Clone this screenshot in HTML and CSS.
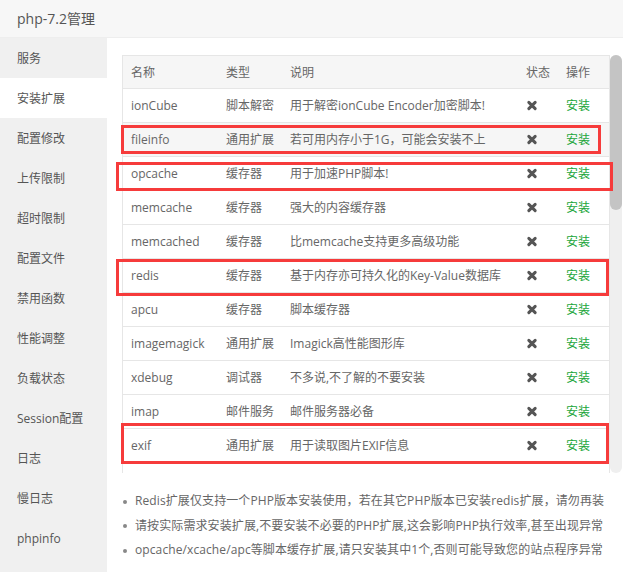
FILE: index.html
```html
<!DOCTYPE html>
<html lang="zh-CN">
<head>
<meta charset="utf-8">
<title>php-7.2管理</title>
<link rel="stylesheet" href="styles.css">
</head>
<body>
<div class="page">
  <header class="title">php-7.2管理</header>
  <div class="body">
    <nav class="side">
      <div class="item">服务</div>
      <div class="item active">安装扩展</div>
      <div class="item">配置修改</div>
      <div class="item">上传限制</div>
      <div class="item">超时限制</div>
      <div class="item">配置文件</div>
      <div class="item">禁用函数</div>
      <div class="item">性能调整</div>
      <div class="item">负载状态</div>
      <div class="item">Session配置</div>
      <div class="item">日志</div>
      <div class="item">慢日志</div>
      <div class="item">phpinfo</div>
    </nav>
    <main class="content">
      <div class="listbox">
        <div class="tablebox">
          <table class="ext">
            <colgroup>
              <col class="c-name"><col class="c-type"><col class="c-desc"><col class="c-state"><col class="c-op">
            </colgroup>
            <thead>
              <tr><th>名称</th><th>类型</th><th>说明</th><th>状态</th><th>操作</th></tr>
            </thead>
            <tbody>
              <tr><td>ionCube</td><td>脚本解密</td><td>用于解密ionCube Encoder加密脚本!</td><td><span class="x"></span></td><td class="op">安装</td></tr>
              <tr class="hover"><td>fileinfo</td><td>通用扩展</td><td>若可用内存小于1G，可能会安装不上</td><td><span class="x"></span></td><td class="op">安装</td></tr>
              <tr><td>opcache</td><td>缓存器</td><td>用于加速PHP脚本!</td><td><span class="x"></span></td><td class="op">安装</td></tr>
              <tr><td>memcache</td><td>缓存器</td><td>强大的内容缓存器</td><td><span class="x"></span></td><td class="op">安装</td></tr>
              <tr><td>memcached</td><td>缓存器</td><td>比memcache支持更多高级功能</td><td><span class="x"></span></td><td class="op">安装</td></tr>
              <tr><td>redis</td><td>缓存器</td><td>基于内存亦可持久化的Key-Value数据库</td><td><span class="x"></span></td><td class="op">安装</td></tr>
              <tr><td>apcu</td><td>缓存器</td><td>脚本缓存器</td><td><span class="x"></span></td><td class="op">安装</td></tr>
              <tr><td>imagemagick</td><td>通用扩展</td><td>Imagick高性能图形库</td><td><span class="x"></span></td><td class="op">安装</td></tr>
              <tr><td>xdebug</td><td>调试器</td><td>不多说,不了解的不要安装</td><td><span class="x"></span></td><td class="op">安装</td></tr>
              <tr><td>imap</td><td>邮件服务</td><td>邮件服务器必备</td><td><span class="x"></span></td><td class="op">安装</td></tr>
              <tr><td>exif</td><td>通用扩展</td><td>用于读取图片EXIF信息</td><td><span class="x"></span></td><td class="op">安装</td></tr>
            </tbody>
          </table>
        </div>
        <div class="track"><div class="thumb"></div></div>
      </div>
      <ul class="notes">
        <li>Redis扩展仅支持一个PHP版本安装使用，若在其它PHP版本已安装redis扩展，请勿再装</li>
        <li>请按实际需求安装扩展,不要安装不必要的PHP扩展,这会影响PHP执行效率,甚至出现异常</li>
        <li>opcache/xcache/apc等脚本缓存扩展,请只安装其中1个,否则可能导致您的站点程序异常</li>
      </ul>
    </main>
  </div>
  <div class="mark m1"></div>
  <div class="mark m2"></div>
  <div class="mark m3"></div>
  <div class="mark m4"></div>
</div>
</body>
</html>
```

FILE: styles.css
```css
* { box-sizing: border-box; }
html, body { margin: 0; padding: 0; background: #fff; }
body {
  font-family: "Open Sans", "Noto Sans CJK SC", sans-serif;
  font-size: 12px;
  color: #666;
}
.page { position: relative; width: 623px; height: 572px; overflow: hidden; }
.title {
  height: 38px;
  line-height: 38px;
  padding-left: 17px;
  font-size: 14px;
  color: #555;
  background: #f7f7f7;
  border-bottom: 1px solid #eee;
}
.body { display: flex; height: 534px; }
.side {
  width: 107px;
  flex: none;
  background: #f0f0f0;
}
.item {
  height: 40px;
  line-height: 41px;
  padding-left: 17px;
  color: #555;
}
.item.active { background: #fff; }
.content {
  flex: 1;
  padding: 17px 1px 0 15px;
}
.listbox {
  display: flex;
  height: 418px;
}
.tablebox {
  flex: 1;
  overflow: hidden;
  border: 1px solid #e6e6e6;
  border-bottom: none;
}
.track {
  width: 12px;
  flex: none;
  background: #efefef;
  border-radius: 6px;
  display: flex;
  flex-direction: column;
}
.thumb {
  height: 155px;
  background: #c4c4c4;
  border-radius: 6px;
}
.ext {
  width: 100%;
  border-collapse: collapse;
  table-layout: fixed;
}
.c-name { width: 95px; }
.c-type { width: 64px; }
.c-desc { width: 236px; }
.c-state { width: 40px; }
.ext th {
  height: 32px;
  background: #f6f6f6;
  font-weight: normal;
  text-align: left;
  padding: 0 8px;
  color: #666;
  border-bottom: 1px solid #e6e6e6;
}
.ext td {
  height: 34px;
  padding: 0 8px;
  border-bottom: 1px solid #e6e6e6;
  white-space: nowrap;
  overflow: hidden;
}
.ext tr.hover td { background: #f6f6f6; }
.ext td.op { color: #20a53a; }
.x {
  display: inline-block;
  width: 10px;
  height: 10px;
  position: relative;
  vertical-align: -1px;
  margin-left: 1px;
}
.x::before, .x::after {
  content: "";
  position: absolute;
  left: -1px;
  top: 3.5px;
  width: 12px;
  height: 3px;
  border-radius: 1.5px;
  background: #555;
  transform: rotate(45deg);
}
.x::after { transform: rotate(-45deg); }
.notes {
  margin: 16px 0 0 0;
  padding: 0 0 0 13px;
  list-style: none;
}
.notes li {
  position: relative;
  line-height: 24.5px;
  color: #666;
  white-space: nowrap;
  letter-spacing: 0.1px;
}
.notes li::before {
  content: "";
  position: absolute;
  left: -12px;
  top: 10.5px;
  width: 4px;
  height: 4px;
  border-radius: 50%;
  background: #888;
}
.mark {
  position: absolute;
  border: 3px solid #f63b3b;
  pointer-events: none;
}
.m1 { left: 121px; top: 125px; width: 480px; height: 29px; }
.m2 { left: 116px; top: 162px; width: 497px; height: 29px; }
.m3 { left: 116px; top: 259px; width: 493px; height: 37px; }
.m4 { left: 121px; top: 423px; width: 488px; height: 41px; }
```
